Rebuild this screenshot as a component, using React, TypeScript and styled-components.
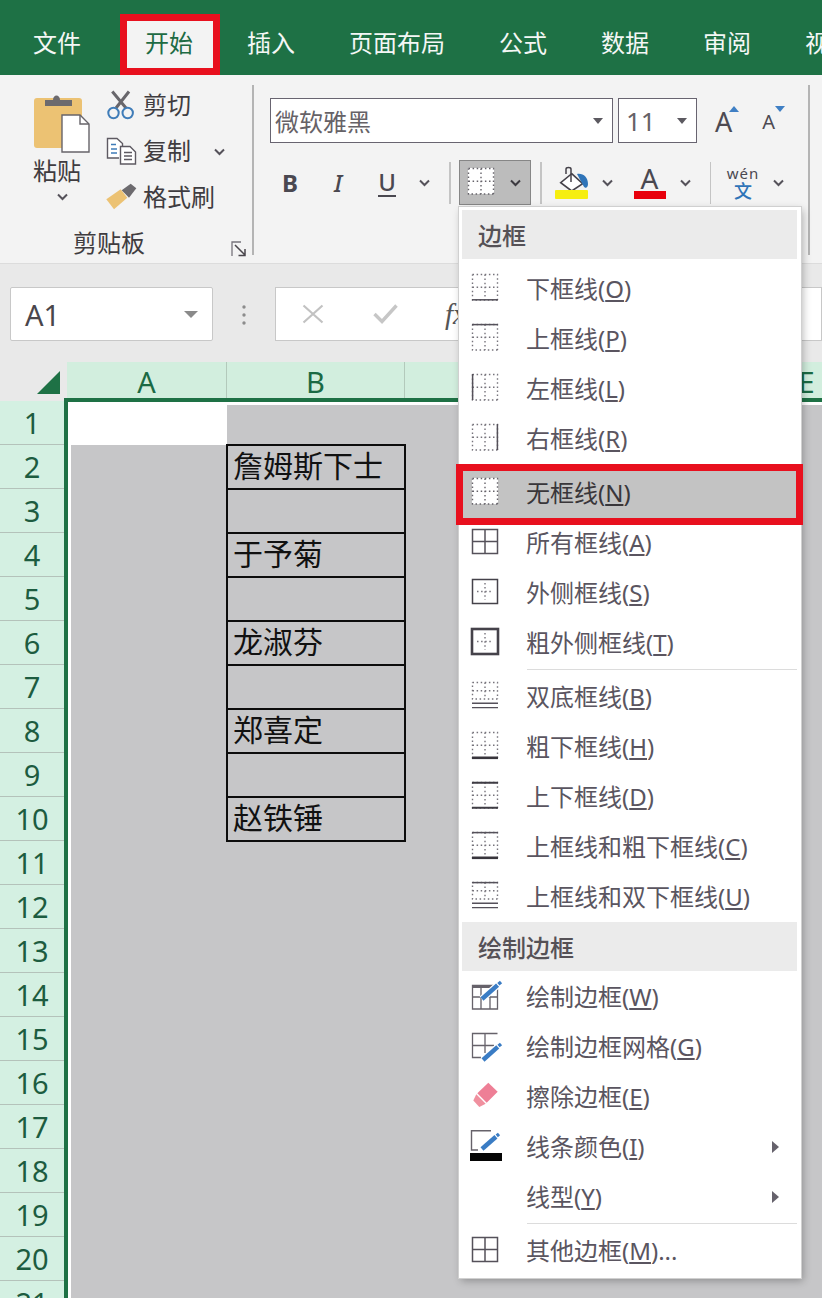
import styled, { createGlobalStyle } from "styled-components";

const GREEN = "#1e7145";
const RED = "#e8101e";
const TEXT = "#4a464c";

const GlobalStyle = createGlobalStyle`
  html, body {
    margin: 0;
    padding: 0;
    background: #c6c6c8;
  }
  *, *::before, *::after {
    box-sizing: border-box;
  }
`;

const Page = styled.div`
  position: relative;
  width: 822px;
  height: 1298px;
  overflow: hidden;
  font-family: "Noto Sans", "Noto Sans CJK SC", sans-serif;
  color: ${TEXT};
`;

const TabBar = styled.div`
  display: flex;
  align-items: flex-end;
  height: 75px;
  padding-left: 6px;
  background: ${GREEN};
  white-space: nowrap;
`;

const Tab = styled.div<{ $active?: boolean }>`
  flex: none;
  display: flex;
  align-items: center;
  height: 61px;
  font-size: 24px;
  line-height: 30px;
  padding: ${(p) => (p.$active ? "0 20px 3px 18px" : "0 27px 3px")};
  margin: ${(p) => (p.$active ? "0 0 0 12px" : "0")};
  color: ${(p) => (p.$active ? "#1e6b43" : "#f4f7f5")};
  background: ${(p) => (p.$active ? "#f3f3f3" : "transparent")};
  border: ${(p) => (p.$active ? `7px solid ${RED}` : "none")};
`;

const Ribbon = styled.div`
  display: flex;
  align-items: flex-start;
  height: 189px;
  padding-top: 10px;
  background: #f3f3f3;
  border-bottom: 1px solid #dcdcdc;
`;

const ClipboardGroup = styled.div`
  flex: none;
  width: 254px;
  height: 170px;
  border-right: 2px solid #b4b4b4;
`;

const ClipboardTop = styled.div`
  display: flex;
  height: 142px;
  padding-left: 33px;
`;

const PasteColumn = styled.div`
  flex: none;
  width: 57px;
  padding-top: 6px;
  display: flex;
  flex-direction: column;
  align-items: flex-start;
`;

const PasteLabel = styled.div`
  font-size: 24px;
  line-height: 34px;
  margin: 1px 0 0 0;
  color: #3f3c40;
`;

const PasteChevron = styled.div`
  margin: 5px 0 0 23px;
  line-height: 0;
`;

const SmallColumn = styled.div`
  margin-left: 16px;
  padding-top: 2px;
  display: flex;
  flex-direction: column;
  gap: 10px;
`;

const SmallItem = styled.div`
  display: flex;
  align-items: center;
  height: 36px;
  font-size: 24px;
  line-height: 36px;
  color: #3f3c40;
`;

const SmallIcon = styled.div`
  flex: none;
  width: 37px;
  line-height: 0;
`;

const InlineChevron = styled.div`
  margin-left: 22px;
  line-height: 0;
`;

const GroupFooter = styled.div`
  display: flex;
  height: 32px;
`;

const GroupLabel = styled.div`
  width: 218px;
  text-align: center;
  font-size: 24px;
  line-height: 32px;
  color: #3f3c40;
`;

const Launcher = styled.div`
  margin: 14px 0 0 13px;
  line-height: 0;
`;

const FontGroup = styled.div`
  flex: none;
  width: 556px;
  height: 170px;
  padding: 13px 0 0 16px;
  border-right: 2px solid #b4b4b4;
`;

const FontRow = styled.div`
  display: flex;
  align-items: center;
  height: 45px;
`;

const ToolRow = styled(FontRow)`
  margin-top: 17px;
`;

const Combo = styled.div<{ $w: number; $large?: boolean }>`
  flex: none;
  display: flex;
  align-items: center;
  justify-content: space-between;
  width: ${(p) => p.$w}px;
  height: 45px;
  margin-right: 5px;
  padding: 0 9px 0 ${(p) => (p.$large ? 7 : 4)}px;
  background: #fff;
  border: 1.5px solid #686470;
  font-size: ${(p) => (p.$large ? 26 : 24)}px;
  color: #666267;
`;

const Caret = styled.span`
  display: block;
  width: 0;
  height: 0;
  border-left: 5px solid transparent;
  border-right: 5px solid transparent;
  border-top: 6px solid #5c5960;
`;

const GrowLetter = styled.div<{ $size: number; $ml: number }>`
  position: relative;
  flex: none;
  margin-left: ${(p) => p.$ml}px;
  font-size: ${(p) => p.$size}px;
  line-height: 34px;
  padding-top: 2px;
  color: #4d4a52;
`;

const LetterMark = styled.span<{ $down?: boolean }>`
  position: absolute;
  top: 3px;
  right: ${(p) => (p.$down ? -10 : -7)}px;
  width: 0;
  height: 0;
  border-left: 5px solid transparent;
  border-right: 5px solid transparent;
  ${(p) =>
    p.$down
      ? "border-top: 6px solid #3f7fc4;"
      : "border-bottom: 6px solid #3f7fc4;"}
`;

const Tool = styled.div<{ $w: number; $ml?: number }>`
  flex: none;
  display: flex;
  align-items: center;
  justify-content: center;
  width: ${(p) => p.$w}px;
  height: 45px;
  margin-left: ${(p) => p.$ml ?? 0}px;
  line-height: 0;
`;

const StyleLetter = styled.span<{ $bold?: boolean; $italic?: boolean; $under?: boolean }>`
  font-family: "Noto Sans", sans-serif;
  font-size: 24px;
  line-height: 26px;
  color: #4a4850;
  font-weight: ${(p) => (p.$bold ? 700 : 500)};
  font-style: ${(p) => (p.$italic ? "italic" : "normal")};
  border-bottom: ${(p) => (p.$under ? "2px solid #4a4850" : "none")};
`;

const ToolSep = styled.div<{ $ml: number }>`
  flex: none;
  width: 1.5px;
  height: 42px;
  margin-left: ${(p) => p.$ml}px;
  background: #c4c4c4;
`;

const BorderButton = styled.div`
  flex: none;
  display: flex;
  align-items: center;
  width: 72px;
  height: 45px;
  margin-left: 8.5px;
  padding-left: 3px;
  background: #bcbcbc;
  border: 1.5px solid #868686;
  line-height: 0;
`;

const ButtonChevron = styled.div`
  margin-left: 10px;
  line-height: 0;
`;

const ColorStack = styled.div`
  display: flex;
  flex-direction: column;
  align-items: center;
  width: 32px;
`;

const ColorLetter = styled.span`
  font-size: 28px;
  line-height: 24px;
  color: #4a4850;
`;

const ColorBar = styled.span`
  display: block;
  width: 32px;
  height: 8px;
  margin-top: 1px;
  background: #e8000c;
`;

const PhoneticStack = styled.div`
  display: flex;
  flex-direction: column;
  align-items: center;
`;

const Pinyin = styled.div`
  font-size: 15px;
  line-height: 17px;
  letter-spacing: 1px;
  color: #4a4850;
`;

const PhoneticChar = styled.div`
  font-size: 18px;
  line-height: 19px;
  font-weight: 500;
  color: #2f74b8;
`;

const FormulaArea = styled.div`
  display: flex;
  align-items: flex-start;
  height: 98px;
  padding: 23px 0 0 10px;
  background: #e9e9e9;
`;

const NameBox = styled.div`
  flex: none;
  display: flex;
  align-items: center;
  justify-content: space-between;
  width: 203px;
  height: 54px;
  padding: 0 14px;
  background: #fff;
  border: 1px solid #c8c8c8;
  border-radius: 2px;
  font-size: 29px;
  color: #4a464c;
`;

const GreyCaret = styled(Caret)`
  border-left-width: 7px;
  border-right-width: 7px;
  border-top: 7px solid #8a8a8a;
`;

const DotsCell = styled.div`
  flex: none;
  display: flex;
  justify-content: center;
  width: 62px;
  padding-top: 17px;
  line-height: 0;
`;

const FormulaBox = styled.div`
  flex: 1;
  display: flex;
  align-items: center;
  height: 54px;
  background: #fff;
  border: 1px solid #c8c8c8;
`;

const FormulaIcon = styled.div<{ $ml: number }>`
  flex: none;
  margin-left: ${(p) => p.$ml}px;
  line-height: 0;
`;

const FxMark = styled.span`
  margin-left: 47px;
  font-family: "Liberation Serif", serif;
  font-style: italic;
  font-size: 29px;
  color: #555;
`;

const ColumnBar = styled.div`
  display: flex;
  height: 36px;
  background: #e9e9e9;
  white-space: nowrap;
`;

const Corner = styled.div`
  flex: none;
  width: 67px;
  padding: 9px 0 0 37px;
  line-height: 0;
`;

const ColumnHead = styled.div<{ $w: number }>`
  flex: none;
  width: ${(p) => p.$w}px;
  height: 36px;
  text-align: center;
  font-size: 29px;
  line-height: 40px;
  color: #1b6a44;
  background: #d2eede;
  border-right: 1.5px solid #b3c9bb;
`;

const SheetBody = styled.div`
  display: flex;
  height: 900px;
`;

const RowHeads = styled.div`
  flex: none;
  width: 64px;
  padding-top: 3px;
  background: #e9e9e9;
`;

const RowHead = styled.div`
  display: flex;
  align-items: center;
  justify-content: center;
  height: 44px;
  background: #d4f0e2;
  border-bottom: 1.5px solid #b4c2ba;
  font-size: 29px;
  line-height: 44px;
  color: #1d5c40;
`;

const Sheet = styled.div`
  flex: 1;
  padding: 3px 0 0 3px;
  background: #fff;
  border-top: 4px solid ${GREEN};
  border-left: 4px solid ${GREEN};
`;

const CellGrid = styled.div`
  display: grid;
  grid-template-columns: 156px 178px 1fr;
  grid-template-rows: 40px repeat(20, 44px);
  height: 100%;
  background: #c6c6c8;
`;

const ActiveCell = styled.div`
  grid-column: 1;
  grid-row: 1;
  margin-top: -3px;
  background: #fff;
`;

const NameCell = styled.div<{ $row: number }>`
  grid-column: 2;
  grid-row: ${(p) => p.$row};
  height: 46px;
  margin: -1px -1px 0 -1px;
  padding-left: 5px;
  border: 2px solid #0c0c0c;
  font-size: 30px;
  line-height: 40px;
  color: #111;
  white-space: nowrap;
`;

const Menu = styled.div`
  position: absolute;
  top: 207px;
  left: 459px;
  width: 342px;
  height: 1071px;
  padding-top: 3px;
  background: #fff;
  box-shadow: 0 0 0 1px #d0d0d0, 2px 3px 8px rgba(0, 0, 0, 0.28);
`;

const MenuHeading = styled.div<{ $gap?: number }>`
  display: flex;
  align-items: center;
  height: 49px;
  margin: 0 4px ${(p) => p.$gap ?? 1}px 3px;
  padding-left: 16px;
  background: #ebebeb;
  font-size: 24px;
  font-weight: 500;
  color: #555156;
`;

const MenuItem = styled.div<{ $hot?: boolean }>`
  position: relative;
  display: flex;
  align-items: center;
  height: ${(p) => (p.$hot ? 54 : 50)}px;
  padding: ${(p) => (p.$hot ? "4px 22px 0 8px" : "0 22px 0 8px")};
  font-size: 24px;
  line-height: 30px;
  white-space: nowrap;
  color: ${(p) => (p.$hot ? "#39363a" : "#5a5560")};
  background: ${(p) => (p.$hot ? "#c3c3c3" : "transparent")};

  ${(p) =>
    p.$hot
      ? `&::after {
    content: "";
    position: absolute;
    top: 0;
    left: -3px;
    right: -2px;
    height: 61px;
    border: 7px solid ${RED};
  }`
      : ""}
`;

const ItemIcon = styled.div`
  flex: none;
  width: 36px;
  height: 36px;
  margin-right: 23px;
  line-height: 0;
`;

const SubArrow = styled.span`
  display: block;
  width: 0;
  height: 0;
  margin-left: auto;
  border-top: 6px solid transparent;
  border-bottom: 6px solid transparent;
  border-left: 7px solid #66626c;
`;

const MenuRule = styled.div`
  height: 4px;
  margin-left: 68px;
  margin-right: 4px;
  border-top: 1.5px solid #dcdcdc;
  transform: translateY(1px);
`;

function Chevron({ color = "#55525a" }: { color?: string }) {
  return (
    <svg width="13" height="8" viewBox="0 0 13 8" fill="none">
      <path d="M2 1.5 L6.5 6 L11 1.5" stroke={color} strokeWidth="2" />
    </svg>
  );
}

type BorderKind =
  | "bottom"
  | "top"
  | "left"
  | "right"
  | "none"
  | "all"
  | "outer"
  | "thick"
  | "double"
  | "thickBottom"
  | "topBottom"
  | "topThick"
  | "topDouble";

function DotGrid({ color = "#77747c", bottom = 29 }: { color?: string; bottom?: number }) {
  const d = `M5.5 3.5H30.5V${bottom}M30.5 ${bottom}H5.5V3.5M18 3.5V${bottom}M5.5 ${(3.5 + bottom) / 2}H30.5`;
  return <path d={d} fill="none" stroke={color} strokeWidth="1.4" strokeDasharray="1.5 2.6" />;
}

function BorderIcon({ kind }: { kind: BorderKind }) {
  const line = "#55515a";
  if (kind === "all") {
    return (
      <svg width="36" height="36" viewBox="0 0 36 36" fill="none">
        <path d="M5.5 4.5H30.5V28.5H5.5ZM18 4.5V28.5M5.5 16.5H30.5" stroke={line} strokeWidth="1.5" />
      </svg>
    );
  }
  if (kind === "outer" || kind === "thick") {
    const wide = kind === "thick";
    return (
      <svg width="36" height="36" viewBox="0 0 36 36" fill="none">
        <path d="M10 16.5H26M18 8V25" stroke="#77747c" strokeWidth="1.4" strokeDasharray="1.5 2.6" />
        <rect x={wide ? 5 : 5.5} y={wide ? 4 : 4.5} width={wide ? 26 : 25} height={wide ? 25 : 24} stroke="#45424a" strokeWidth={wide ? 2.6 : 1.5} />
      </svg>
    );
  }
  const isDouble = kind === "double" || kind === "topDouble";
  return (
    <svg width="36" height="36" viewBox="0 0 36 36" fill="none">
      {kind === "none" && <rect x="5" y="3" width="26" height="26" fill="#fff" />}
      <DotGrid bottom={isDouble ? 20 : 29} color={kind === "none" ? "#66636a" : "#77747c"} />
      {kind === "bottom" && <path d="M5 28.8H31" stroke={line} strokeWidth="1.5" />}
      {(kind === "top" || kind === "topThick" || kind === "topDouble") && (
        <path d="M5 3.6H31" stroke={line} strokeWidth="1.5" />
      )}
      {kind === "left" && <path d="M5.6 3V29" stroke={line} strokeWidth="1.5" />}
      {kind === "right" && <path d="M30.4 3V29" stroke={line} strokeWidth="1.5" />}
      {isDouble && <path d="M5 24.2H31M5 28.6H31" stroke={line} strokeWidth="1.4" />}
      {(kind === "thickBottom" || kind === "topThick") && <path d="M5 28.8H31" stroke="#38353c" strokeWidth="2.6" />}
      {kind === "topBottom" && <path d="M5 3.8H31M5 28.8H31" stroke="#3f3c44" strokeWidth="2" />}
    </svg>
  );
}

function Pencil({ x1, y1, x2, y2 }: { x1: number; y1: number; x2: number; y2: number }) {
  const mx = x1 + (x2 - x1) * 0.82;
  const my = y1 + (y2 - y1) * 0.82;
  return (
    <>
      <path d={`M${x1} ${y1}L${x2} ${y2}`} stroke="#fff" strokeWidth="7" />
      <path d={`M${x1} ${y1}L${mx} ${my}`} stroke="#3a7cc4" strokeWidth="4.5" />
      <path d={`M${mx + 0.8} ${my - 0.8}L${x2} ${y2}`} stroke="#3a7cc4" strokeWidth="3.4" />
    </>
  );
}

function DrawIcon() {
  return (
    <svg width="36" height="36" viewBox="0 0 36 36" fill="none">
      <path d="M5.5 6.5H30.5V30H5.5ZM14 9V30M23 9V30M5.5 18H30.5" stroke="#66626a" strokeWidth="1.3" />
      <rect x="5" y="6" width="26" height="3" fill="#66626a" />
      <Pencil x1={15} y1={20} x2={34} y2={3} />
    </svg>
  );
}

function DrawGridIcon() {
  return (
    <svg width="36" height="36" viewBox="0 0 36 36" fill="none">
      <path d="M30.5 4.5H5.5V28.5H14M18 4.5V24M5.5 16.5H27" stroke="#66626a" strokeWidth="1.3" />
      <Pencil x1={16} y1={31} x2={34} y2={15} />
    </svg>
  );
}

function EraserIcon() {
  return (
    <svg width="36" height="36" viewBox="0 0 36 36">
      <path d="M21.3 3.7L30.7 12.7L19.7 23.7L10.3 14.3Z" fill="#ee7f96" />
      <path d="M9.3 15.3L18.7 24.7L12.3 28L6.3 21.5Z" fill="#f0909f" />
    </svg>
  );
}

function LineColorIcon() {
  return (
    <svg width="36" height="36" viewBox="0 0 36 36" fill="none">
      <path d="M24 1.7H4.5V21H11" stroke="#66626a" strokeWidth="1.4" />
      <Pencil x1={15} y1={20} x2={32} y2={5} />
      <rect x="3" y="24" width="32" height="8" fill="#050505" />
    </svg>
  );
}

function ClipboardIcon() {
  return (
    <svg width="58" height="62" viewBox="0 0 58 62">
      <rect x="1" y="7" width="48" height="50" rx="3" fill="#ecc273" />
      <path d="M12 15V9H20C20 3 27 3 27 9H39V15Z" fill="#6c6a6e" />
      <path d="M29 24H47L56 33V61H29Z" fill="#fff" stroke="#67646a" strokeWidth="1.4" />
      <path d="M47 24V33H56" fill="none" stroke="#67646a" strokeWidth="1.4" />
    </svg>
  );
}

function ScissorsIcon() {
  return (
    <svg width="30" height="30" viewBox="0 0 30 30" fill="none">
      <path d="M6.3 1.5L20 18M23 1.5L10 18" stroke="#68666b" strokeWidth="3" />
      <circle cx="7.5" cy="23" r="5.2" stroke="#3f7cb8" strokeWidth="2" />
      <circle cx="21.7" cy="23" r="5.2" stroke="#3f7cb8" strokeWidth="2" />
    </svg>
  );
}

function CopyIcon() {
  return (
    <svg width="31" height="28" viewBox="0 0 31 28" fill="none">
      <path d="M13 21H1.5V1.5H11L16.5 6.5V9" stroke="#5e5a62" strokeWidth="1.4" fill="#fff" />
      <path d="M14.5 9.5H24L29.5 15V27H14.5Z" stroke="#5e5a62" strokeWidth="1.4" fill="#fff" />
      <path d="M5 7.5H10M5 12H11M5 16H11" stroke="#3f7cb8" strokeWidth="1.3" />
      <path d="M18 15.5H26M18 19H26M18 22.5H26" stroke="#5e5a62" strokeWidth="1.3" />
    </svg>
  );
}

function BrushIcon() {
  return (
    <svg width="32" height="28" viewBox="0 0 32 28">
      <path d="M0.3 16.3L14.7 6.3L21.3 14.7L8 26.3Z" fill="#ecc273" />
      <path d="M15.7 7.3L24.7 0.7L30.3 5.3L23 14.7Z" fill="#6c6a6e" />
    </svg>
  );
}

function LauncherIcon() {
  return (
    <svg width="16" height="16" viewBox="0 0 16 16" fill="none">
      <path d="M10 1H1V15" stroke="#77747c" strokeWidth="1.3" />
      <path d="M4 4L14 14M14 8V14.5H7.5" stroke="#4a464c" strokeWidth="1.5" />
    </svg>
  );
}

function FillIcon() {
  return (
    <svg width="35" height="34" viewBox="0 0 35 34">
      <path d="M16.7 7.7L27.7 17.7L16.7 25L5.7 16.7Z" fill="#fff" stroke="#45424a" strokeWidth="1.6" />
      <path d="M11 8V3.2C11 1 16 1 16 3.2V16" fill="none" stroke="#45424a" strokeWidth="1.5" />
      <path d="M22 8C28 7 33 11 33 18C33 22 30 23 28.5 20Z" fill="#2f74b8" />
      <rect x="0" y="24" width="33" height="9" rx="1" fill="#f6ee10" />
    </svg>
  );
}

const tabs = ["文件", "开始", "插入", "页面布局", "公式", "数据", "审阅", "视图"];
const rows = Array.from({ length: 21 }, (_, i) => i + 1);
const names: [number, string][] = [
  [2, "詹姆斯下士"],
  [3, ""],
  [4, "于予菊"],
  [5, ""],
  [6, "龙淑芬"],
  [7, ""],
  [8, "郑喜定"],
  [9, ""],
  [10, "赵铁锤"],
];

function Entry({
  icon,
  label,
  mark,
  hot,
  more,
  tail,
}: {
  icon?: React.ReactNode;
  label: string;
  mark: string;
  hot?: boolean;
  more?: boolean;
  tail?: string;
}) {
  return (
    <MenuItem $hot={hot}>
      <ItemIcon>{icon}</ItemIcon>
      <span>
        {label}(<u>{mark}</u>){tail}
      </span>
      {more && <SubArrow />}
    </MenuItem>
  );
}

export default function App() {
  return (
    <Page>
      <GlobalStyle />
      <TabBar>
        {tabs.map((t) => (
          <Tab key={t} $active={t === "开始"}>
            {t}
          </Tab>
        ))}
      </TabBar>

      <Ribbon>
        <ClipboardGroup>
          <ClipboardTop>
            <PasteColumn>
              <ClipboardIcon />
              <PasteLabel>粘贴</PasteLabel>
              <PasteChevron>
                <Chevron />
              </PasteChevron>
            </PasteColumn>
            <SmallColumn>
              <SmallItem>
                <SmallIcon>
                  <ScissorsIcon />
                </SmallIcon>
                剪切
              </SmallItem>
              <SmallItem>
                <SmallIcon>
                  <CopyIcon />
                </SmallIcon>
                复制
                <InlineChevron>
                  <Chevron />
                </InlineChevron>
              </SmallItem>
              <SmallItem>
                <SmallIcon>
                  <BrushIcon />
                </SmallIcon>
                格式刷
              </SmallItem>
            </SmallColumn>
          </ClipboardTop>
          <GroupFooter>
            <GroupLabel>剪贴板</GroupLabel>
            <Launcher>
              <LauncherIcon />
            </Launcher>
          </GroupFooter>
        </ClipboardGroup>

        <FontGroup>
          <FontRow>
            <Combo $w={343}>
              微软雅黑
              <Caret />
            </Combo>
            <Combo $w={79} $large>
              11
              <Caret />
            </Combo>
            <GrowLetter $size={27} $ml={13}>
              A
              <LetterMark />
            </GrowLetter>
            <GrowLetter $size={20} $ml={30}>
              A
              <LetterMark $down />
            </GrowLetter>
          </FontRow>
          <ToolRow>
            <Tool $w={40}>
              <StyleLetter $bold>B</StyleLetter>
            </Tool>
            <Tool $w={56}>
              <StyleLetter $italic>I</StyleLetter>
            </Tool>
            <Tool $w={42}>
              <StyleLetter $under>U</StyleLetter>
            </Tool>
            <Tool $w={32}>
              <Chevron />
            </Tool>
            <ToolSep $ml={9} />
            <BorderButton>
              <BorderIcon kind="none" />
              <ButtonChevron>
                <Chevron color="#3c3a40" />
              </ButtonChevron>
            </BorderButton>
            <ToolSep $ml={9} />
            <Tool $w={35} $ml={13}>
              <FillIcon />
            </Tool>
            <Tool $w={36}>
              <Chevron />
            </Tool>
            <Tool $w={32} $ml={8}>
              <ColorStack>
                <ColorLetter>A</ColorLetter>
                <ColorBar />
              </ColorStack>
            </Tool>
            <Tool $w={40}>
              <Chevron />
            </Tool>
            <ToolSep $ml={4} />
            <Tool $w={32} $ml={16}>
              <PhoneticStack>
                <Pinyin>wén</Pinyin>
                <PhoneticChar>文</PhoneticChar>
              </PhoneticStack>
            </Tool>
            <Tool $w={38}>
              <Chevron />
            </Tool>
          </ToolRow>
        </FontGroup>
      </Ribbon>

      <FormulaArea>
        <NameBox>
          A1
          <GreyCaret />
        </NameBox>
        <DotsCell>
          <svg width="6" height="22" viewBox="0 0 6 22">
            <circle cx="3" cy="3" r="1.7" fill="#8c8c8c" />
            <circle cx="3" cy="11" r="1.7" fill="#8c8c8c" />
            <circle cx="3" cy="19" r="1.7" fill="#8c8c8c" />
          </svg>
        </DotsCell>
        <FormulaBox>
          <FormulaIcon $ml={26}>
            <svg width="22" height="20" viewBox="0 0 22 20" fill="none">
              <path d="M1.5 1.5L20.5 18.5M20.5 1.5L1.5 18.5" stroke="#c2c2c2" strokeWidth="2.2" />
            </svg>
          </FormulaIcon>
          <FormulaIcon $ml={49}>
            <svg width="25" height="20" viewBox="0 0 25 20" fill="none">
              <path d="M1.5 10L9 17.5L23.5 1.5" stroke="#c6c6c6" strokeWidth="3.4" />
            </svg>
          </FormulaIcon>
          <FxMark>fx</FxMark>
        </FormulaBox>
      </FormulaArea>

      <ColumnBar>
        <Corner>
          <svg width="23" height="23" viewBox="0 0 23 23">
            <path d="M23 0V23H0Z" fill={GREEN} />
          </svg>
        </Corner>
        <ColumnHead $w={160}>A</ColumnHead>
        <ColumnHead $w={178}>B</ColumnHead>
        <ColumnHead $w={178}>C</ColumnHead>
        <ColumnHead $w={178}>D</ColumnHead>
        <ColumnHead $w={92}>E</ColumnHead>
      </ColumnBar>

      <SheetBody>
        <RowHeads>
          {rows.map((r) => (
            <RowHead key={r}>{r}</RowHead>
          ))}
        </RowHeads>
        <Sheet>
          <CellGrid>
            <ActiveCell />
            {names.map(([row, name]) => (
              <NameCell key={row} $row={row}>
                {name}
              </NameCell>
            ))}
          </CellGrid>
        </Sheet>
      </SheetBody>

      <Menu>
        <MenuHeading $gap={5}>边框</MenuHeading>
        <Entry icon={<BorderIcon kind="bottom" />} label="下框线" mark="O" />
        <Entry icon={<BorderIcon kind="top" />} label="上框线" mark="P" />
        <Entry icon={<BorderIcon kind="left" />} label="左框线" mark="L" />
        <Entry icon={<BorderIcon kind="right" />} label="右框线" mark="R" />
        <Entry icon={<BorderIcon kind="none" />} label="无框线" mark="N" hot />
        <Entry icon={<BorderIcon kind="all" />} label="所有框线" mark="A" />
        <Entry icon={<BorderIcon kind="outer" />} label="外侧框线" mark="S" />
        <Entry icon={<BorderIcon kind="thick" />} label="粗外侧框线" mark="T" />
        <MenuRule />
        <Entry icon={<BorderIcon kind="double" />} label="双底框线" mark="B" />
        <Entry icon={<BorderIcon kind="thickBottom" />} label="粗下框线" mark="H" />
        <Entry icon={<BorderIcon kind="topBottom" />} label="上下框线" mark="D" />
        <Entry icon={<BorderIcon kind="topThick" />} label="上框线和粗下框线" mark="C" />
        <Entry icon={<BorderIcon kind="topDouble" />} label="上框线和双下框线" mark="U" />
        <MenuHeading>绘制边框</MenuHeading>
        <Entry icon={<DrawIcon />} label="绘制边框" mark="W" />
        <Entry icon={<DrawGridIcon />} label="绘制边框网格" mark="G" />
        <Entry icon={<EraserIcon />} label="擦除边框" mark="E" />
        <Entry icon={<LineColorIcon />} label="线条颜色" mark="I" more />
        <Entry label="线型" mark="Y" more />
        <MenuRule />
        <Entry icon={<BorderIcon kind="all" />} label="其他边框" mark="M" tail="..." />
      </Menu>
    </Page>
  );
}
